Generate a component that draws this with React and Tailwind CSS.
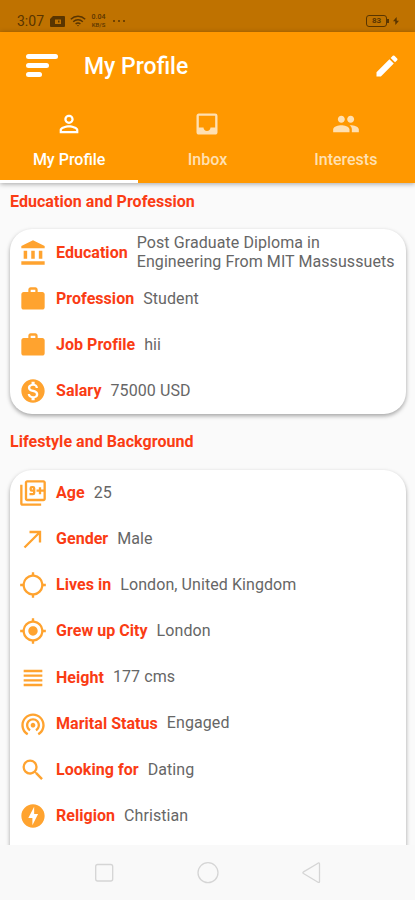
import {
  MdAccountBalance,
  MdCallMade,
  MdEdit,
  MdFilter9Plus,
  MdInbox,
  MdLocationSearching,
  MdMonetizationOn,
  MdMyLocation,
  MdOfflineBolt,
  MdPeople,
  MdPermIdentity,
  MdSearch,
  MdViewHeadline,
  MdWifiTethering,
  MdWork,
} from "react-icons/md";

const tabs = [
  { label: "My Profile", icon: MdPermIdentity, active: true },
  { label: "Inbox", icon: MdInbox },
  { label: "Interests", icon: MdPeople },
];

const education = [
  {
    icon: MdAccountBalance,
    label: "Education",
    value: "Post Graduate Diploma in Engineering From MIT Massussuets",
  },
  { icon: MdWork, label: "Profession", value: "Student" },
  { icon: MdWork, label: "Job Profile", value: "hii" },
  { icon: MdMonetizationOn, label: "Salary", value: "75000 USD" },
];

const lifestyle = [
  { icon: MdFilter9Plus, label: "Age", value: "25" },
  { icon: MdCallMade, label: "Gender", value: "Male" },
  { icon: MdLocationSearching, label: "Lives in", value: "London, United Kingdom" },
  { icon: MdMyLocation, label: "Grew up City", value: "London" },
  { icon: MdViewHeadline, label: "Height", value: "177 cms" },
  { icon: MdWifiTethering, label: "Marital Status", value: "Engaged" },
  { icon: MdSearch, label: "Looking for", value: "Dating" },
  { icon: MdOfflineBolt, label: "Religion", value: "Christian" },
];

const StatusBar = () => (
  <div className="flex h-8 shrink-0 items-center bg-[#bf7200] pt-2.5 pr-[16px] pl-[17px] text-[#593500]">
    <span className="text-[14px] leading-none">3:07</span>
    <svg className="ml-[6px]" width="15" height="11" viewBox="0 0 15 11">
      <path
        fill="currentColor"
        fillRule="evenodd"
        d="M3 0h11a1 1 0 0 1 1 1v9a1 1 0 0 1-1 1H1a1 1 0 0 1-1-1V3zM5 3.5v4.5h6V3.5zM8 4.5h1.5v2H8z"
      />
    </svg>
    <svg
      className="ml-[5px]"
      width="16"
      height="12"
      viewBox="0 0 16 12"
      fill="none"
      stroke="currentColor"
      strokeWidth="1.5"
    >
      <path d="M.8 4.2a10.5 10.5 0 0 1 14.4 0M3.2 6.7a7 7 0 0 1 9.6 0M5.6 9a3.6 3.6 0 0 1 4.8 0" />
      <path d="M7 10h2l-1 1.5z" fill="currentColor" stroke="none" />
    </svg>
    <span className="ml-[4px] flex w-[17px] flex-col text-center text-[7px] font-medium leading-[7px]">
      <span>0.04</span>
      <span className="text-[6px] leading-[7px]">KB/S</span>
    </span>
    <span className="ml-[6px] flex gap-[3px]">
      <span className="size-[2px] rounded-full bg-current" />
      <span className="size-[2px] rounded-full bg-current" />
      <span className="size-[2px] rounded-full bg-current" />
    </span>
    <span className="ml-auto flex h-[12px] w-[21px] items-center justify-center rounded-[3px] border border-current text-[8px] font-bold leading-none">
      83
    </span>
    <span className="h-1 w-[2px] bg-current" />
    <svg className="ml-[4px]" width="6" height="8" viewBox="0 0 6 8">
      <path fill="currentColor" d="M3.6 0 0 4.2h2.2L2.4 8 6 3.8H3.8z" />
    </svg>
  </div>
);

const Header = () => (
  <header className="relative z-10 flex h-[151px] shrink-0 flex-col bg-[#ff9800] text-white shadow-[0_1px_5px_rgba(0,0,0,0.35)]">
    <div className="flex h-[67px] items-center pr-[14px] pl-[26px]">
      <div className="flex w-8 flex-col gap-[4px]">
        <span className="h-[5px] w-8 rounded-full bg-white" />
        <span className="h-[5px] w-[23px] rounded-full bg-white" />
        <span className="h-[5px] w-[16px] rounded-full bg-white" />
      </div>
      <h1 className="ml-[26px] pt-px text-[23px] font-medium leading-none">My Profile</h1>
      <MdEdit className="ml-auto" size={28} />
    </div>

    <nav className="grid flex-1 grid-cols-3">
      {tabs.map(({ label, icon: Icon, active }) => (
        <div
          key={label}
          className={
            active
              ? "flex flex-col items-center border-b-[3px] border-white pt-[11px]"
              : "flex flex-col items-center pt-[11px] text-[#ffe0b2]"
          }
        >
          <Icon size={28} />
          <span className="mt-[12px] text-[16px] font-medium leading-[19px]">{label}</span>
        </div>
      ))}
    </nav>
  </header>
);

const InfoRow = ({ icon: Icon, label, value }) => (
  <div className="flex h-[46.15px] items-center">
    <Icon className="shrink-0 text-[#ffa32f]" size={28} />
    <span className="ml-[9px] shrink-0 text-[16px] font-bold tracking-[0.04px] text-[#fa3c14]">
      {label}
    </span>
    <span className="ml-[9px] text-[16px] leading-[18.5px] tracking-[0.08px] text-[#666]">{value}</span>
  </div>
);

const Section = ({ title, rows, className }) => (
  <section className={className}>
    <h2 className="text-[16px] font-bold leading-[19px] tracking-[0.05px] text-[#fa3c14]">{title}</h2>
    <div className="mt-[18px] rounded-[22px] bg-white pr-1 pl-[9px] shadow-[0_2px_4px_rgba(0,0,0,0.35)]">
      {rows.map((row) => (
        <InfoRow key={row.label} {...row} />
      ))}
    </div>
  </section>
);

const NavigationBar = () => (
  <div className="relative z-10 h-[55px] shrink-0 bg-[#f9f9f9]">
    <svg width="415" height="55" fill="none" stroke="#d5d5d5" strokeWidth="1.3">
      <rect x="95.7" y="19.5" width="17" height="16.5" rx="2" />
      <circle cx="208" cy="27.7" r="10" />
      <path d="M303.5 26.9 318 18.2q1.5-.7 1.5.8v17.4q0 1.5-1.5.8l-14.5-8.7q-1.2-.8 0-1.6z" />
    </svg>
  </div>
);

const App = () => {
  return (
    <div className="flex h-[900px] w-[415px] flex-col overflow-hidden bg-[#fafafa] font-[Roboto,sans-serif]">
      <StatusBar />
      <Header />
      <main className="min-h-0 flex-1 overflow-hidden pr-[9px] pl-[10px]">
        <Section
          className="pt-[9px] [&>div]:pt-[0.6px]"
          title="Education and Profession"
          rows={education}
        />
        <Section
          className="pt-[17.8px] [&>div]:mt-[19px] [&>div]:pb-10"
          title="Lifestyle and Background"
          rows={lifestyle}
        />
      </main>
      <NavigationBar />
    </div>
  );
};

export default App;
